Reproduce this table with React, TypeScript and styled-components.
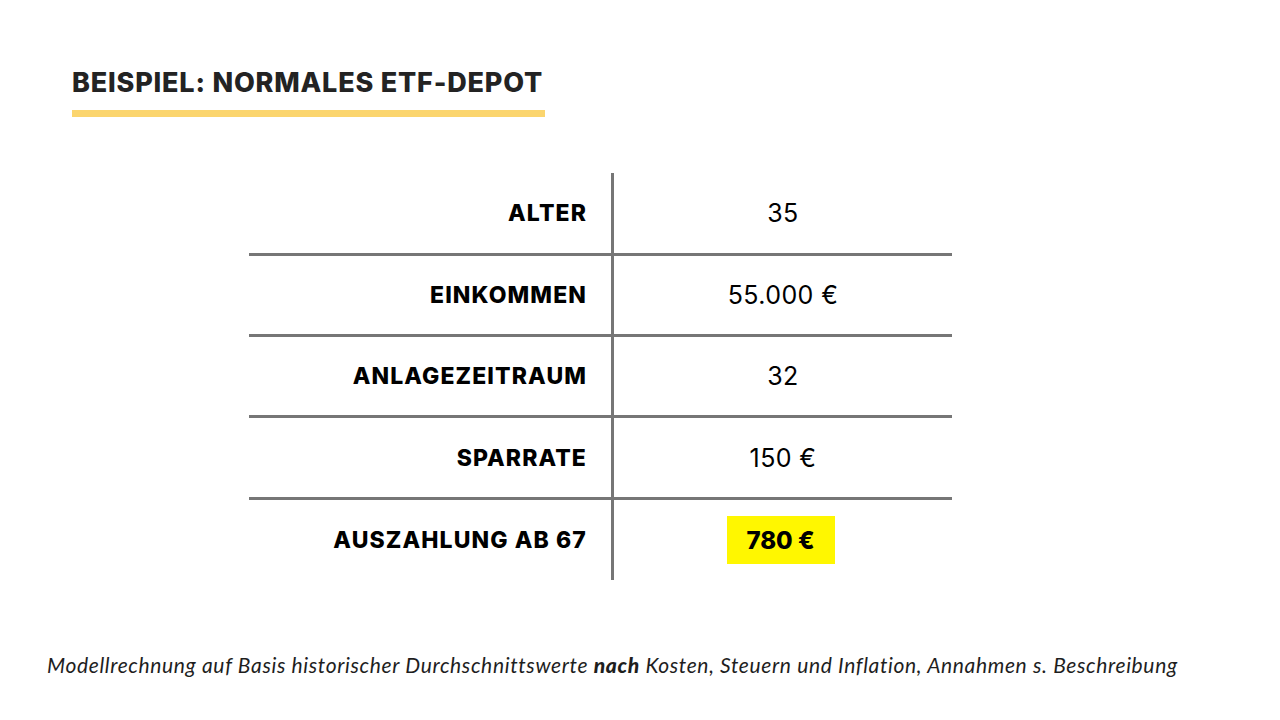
import React from "react";
import styled, { createGlobalStyle } from "styled-components";

const Global = createGlobalStyle`
  html, body { margin: 0; padding: 0; background: #ffffff; }
  body { width: 1280px; height: 720px; overflow: hidden; font-family: "Inter", "Liberation Sans", sans-serif; }
`;

const Page = styled.div`
  width: 1280px;
  height: 720px;
  display: flex;
  flex-direction: column;
  box-sizing: border-box;
  padding-top: 66px;
`;

const Header = styled.div`
  padding-left: 72px;
  display: flex;
  flex-direction: column;
  align-items: flex-start;
`;

const Title = styled.h1`
  margin: 0;
  font-family: "Inter", sans-serif;
  font-weight: 800;
  font-size: 27px;
  line-height: 34px;
  letter-spacing: 0.8px;
  color: #232323;
`;

const Underline = styled.div`
  width: 473px;
  height: 7px;
  margin-top: 10px;
  background: #fbd56e;
`;

const Table = styled.div`
  margin-top: 56px;
  margin-left: 249px;
  width: 703px;
  display: grid;
  grid-template-columns: 362px 3px 338px;
`;

const Label = styled.div<{ $h: number; $last?: boolean }>`
  height: ${(p) => p.$h}px;
  display: flex;
  align-items: center;
  justify-content: flex-end;
  padding-right: 24px;
  font-weight: 800;
  font-size: 23px;
  letter-spacing: 1.1px;
  color: #000;
  border-bottom: ${(p) => (p.$last ? "none" : "3px solid #767676")};
`;

const Value = styled.div<{ $h: number; $last?: boolean }>`
  height: ${(p) => p.$h}px;
  display: flex;
  align-items: center;
  justify-content: center;
  font-weight: 400;
  font-size: 25px;
  letter-spacing: 0.4px;
  color: #000;
  border-bottom: ${(p) => (p.$last ? "none" : "3px solid #767676")};
`;

const Divider = styled.div`
  grid-column: 2;
  grid-row: 1 / span 5;
  background: #767676;
`;

const Highlight = styled.span`
  display: inline-flex;
  align-items: center;
  justify-content: center;
  width: 108px;
  height: 48px;
  margin-left: -5px;
  background: #fff700;
  font-weight: 800;
  font-size: 24px;
  letter-spacing: 0;
`;

const Footer = styled.p`
  margin: 72px 0 0 47px;
  font-family: "Lato", sans-serif;
  font-style: italic;
  font-size: 21px;
  letter-spacing: 0.65px;
  color: #1e1e1e;
  white-space: nowrap;
  b { font-weight: 900; }
`;

const rows: { label: string; value: React.ReactNode; h: number }[] = [
  { label: "ALTER", value: "35", h: 80 },
  { label: "EINKOMMEN", value: "55.000 €", h: 78 },
  { label: "ANLAGEZEITRAUM", value: "32", h: 78 },
  { label: "SPARRATE", value: "150 €", h: 79 },
  { label: "AUSZAHLUNG AB 67", value: <Highlight>780 €</Highlight>, h: 80 },
];

export default function App() {
  return (
    <>
      <Global />
      <Page>
        <Header>
          <Title>BEISPIEL: NORMALES ETF-DEPOT</Title>
          <Underline />
        </Header>
        <Table>
          {rows.map((r, i) => (
            <React.Fragment key={r.label}>
              <Label $h={r.h} $last={i === rows.length - 1} style={{ gridRow: i + 1, gridColumn: 1 }}>
                {r.label}
              </Label>
              <Value $h={r.h} $last={i === rows.length - 1} style={{ gridRow: i + 1, gridColumn: 3 }}>
                {r.value}
              </Value>
            </React.Fragment>
          ))}
          <Divider />
        </Table>
        <Footer>
          Modellrechnung auf Basis historischer Durchschnittswerte <b>nach</b> Kosten, Steuern und Inflation, Annahmen s. Beschreibung
        </Footer>
      </Page>
    </>
  );
}
